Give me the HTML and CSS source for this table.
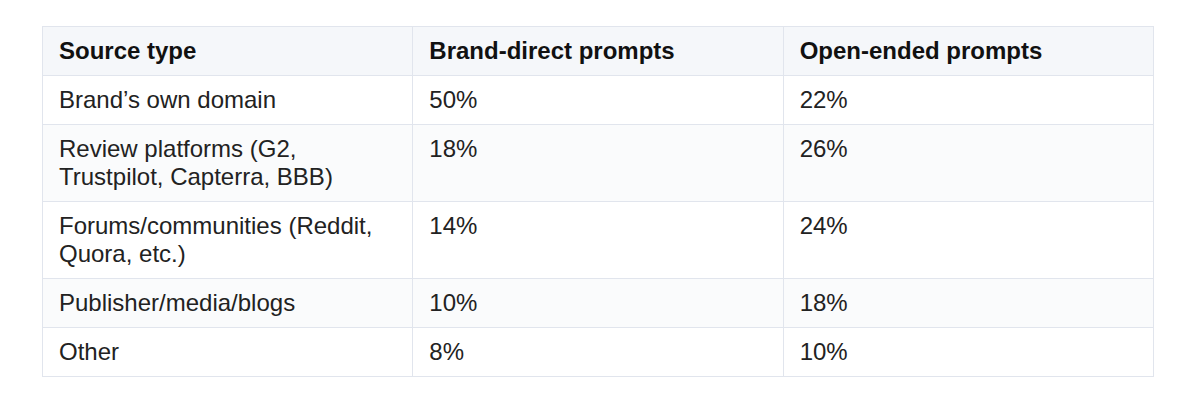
FILE: index.html
```html
<!DOCTYPE html>
<html lang="en">
<head>
<meta charset="utf-8">
<title>Source types</title>
<link rel="stylesheet" href="styles.css">
</head>
<body>
<div class="wrap">
  <table class="data">
    <thead>
      <tr><th>Source type</th><th>Brand-direct prompts</th><th>Open-ended prompts</th></tr>
    </thead>
    <tbody>
      <tr><td>Brand’s own domain</td><td>50%</td><td>22%</td></tr>
      <tr><td>Review platforms (G2,<br>Trustpilot, Capterra, BBB)</td><td>18%</td><td>26%</td></tr>
      <tr><td>Forums/communities (Reddit,<br>Quora, etc.)</td><td>14%</td><td>24%</td></tr>
      <tr><td>Publisher/media/blogs</td><td>10%</td><td>18%</td></tr>
      <tr><td>Other</td><td>8%</td><td>10%</td></tr>
    </tbody>
  </table>
</div>
</body>
</html>
```
FILE: styles.css
```css
html, body {
  margin: 0;
  padding: 0;
  background: #ffffff;
}
.wrap {
  padding: 26px 0 0 42px;
}
.data {
  width: 1112px;
  table-layout: fixed;
  border-collapse: collapse;
  font-family: "Liberation Sans", Arial, sans-serif;
  font-size: 24px;
  line-height: 28px;
  color: #222222;
}
.data th,
.data td {
  border: 1px solid #e1e5ed;
  padding: 10px 16px;
  text-align: left;
  vertical-align: top;
  width: 33.333%;
}
.data th {
  background: #f5f7fa;
  font-weight: 700;
  color: #111111;
}
.data tbody tr:nth-child(even) td {
  background: #fafbfc;
}
```
